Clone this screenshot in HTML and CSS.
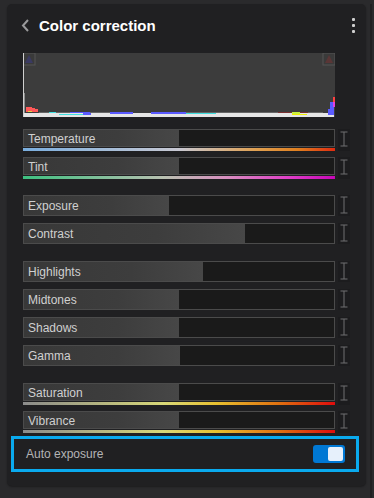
FILE: index.html
```html
<!DOCTYPE html>
<html lang="en">
<head>
  <meta charset="UTF-8">
  <meta name="viewport" content="width=device-width, initial-scale=1.0">
  <title>Color correction</title>
  <link rel="stylesheet" href="styles.css">
</head>
<body>
  <div class="page">
    <div class="panel">
      <div class="header">
        <svg class="back" width="9" height="13" viewBox="0 0 9 13">
          <path d="M7 1 L2 6.5 L7 12" fill="none" stroke="#9a9a9c" stroke-width="2"/>
        </svg>
        <h1>Color correction</h1>
        <svg class="more" width="5" height="16" viewBox="0 0 5 16">
          <rect x="1" y="1" width="3" height="3" rx="1" fill="#cfcfcf"/>
          <rect x="1" y="7" width="3" height="3" rx="1" fill="#cfcfcf"/>
          <rect x="1" y="13" width="3" height="3" rx="1" fill="#cfcfcf"/>
        </svg>
      </div>

      <svg class="histogram" width="312" height="64" viewBox="0 0 312 64">
        <rect width="312" height="64" fill="#3c3c3c"/>
        <rect x="0" y="0" width="12" height="12" fill="#3a3a3a" stroke="#555" stroke-width="1"/>
        <path d="M6 2 L10 10 L2 10 Z" fill="#3a3a62"/>
        <rect x="300" y="0" width="12" height="12" fill="#3a3a3a" stroke="#555" stroke-width="1"/>
        <path d="M306 2 L310 10 L302 10 Z" fill="#5a3636"/>
        <rect x="0" y="0" width="1" height="64" fill="#cfcfcf"/>
        <rect x="1" y="40" width="1" height="24" fill="#8a8a8a"/>
        <path d="M3 54 L9 54 L9 55 L12 55 L12 56 L15 56 L15 59 L3 59 Z" fill="#ff5858"/>
        <rect x="5" y="58" width="4" height="1" fill="#e8d040"/>
        <rect x="1" y="60" width="310" height="4" fill="#e6e6e6"/>
        <rect x="16" y="59" width="90" height="1" fill="#666"/>
        <rect x="130" y="59" width="170" height="1" fill="#666"/>
        <rect x="26" y="59" width="7" height="1" fill="#40e0e0"/>
        <rect x="36" y="61" width="24" height="1" fill="#40e0e0"/>
        <rect x="47" y="59" width="20" height="1" fill="#5a5aff"/>
        <rect x="60" y="60" width="8" height="2" fill="#5a5aff"/>
        <rect x="87" y="59" width="23" height="2" fill="#5a5aff"/>
        <rect x="128" y="59" width="35" height="2" fill="#5a5aff"/>
        <rect x="163" y="60" width="30" height="1" fill="#40e0e0"/>
        <rect x="255" y="59" width="30" height="1" fill="#7a3030"/>
        <rect x="269" y="59" width="8" height="2" fill="#c8f040"/>
        <rect x="269" y="61" width="15" height="1" fill="#f0f000"/>
        <rect x="307" y="49" width="4" height="13" fill="#5a5aff"/>
        <rect x="305" y="56" width="3" height="6" fill="#5a5aff"/>
        <rect x="310" y="49" width="2" height="5" fill="#e040e0"/>
        <rect x="310" y="44" width="2" height="5" fill="#ff4040"/>
      </svg>

      <div class="group">
        <div class="row">
          <div class="control">
            <div class="slider short"><div class="fill" style="width: 50%"></div><span>Temperature</span></div>
            <div class="scale temp"></div>
          </div>
          <div class="reset"><svg width="8" height="16" viewBox="0 0 8 16"><path d="M0.5 1 H7.5 M4 1 V15 M0.5 15 H7.5" stroke="#6e6e70" stroke-width="1" fill="none"/></svg></div>
        </div>
        <div class="row">
          <div class="control">
            <div class="slider short"><div class="fill" style="width: 50%"></div><span>Tint</span></div>
            <div class="scale tint"></div>
          </div>
          <div class="reset"><svg width="8" height="16" viewBox="0 0 8 16"><path d="M0.5 1 H7.5 M4 1 V15 M0.5 15 H7.5" stroke="#6e6e70" stroke-width="1" fill="none"/></svg></div>
        </div>
      </div>

      <div class="group plain">
        <div class="row">
          <div class="slider"><div class="fill" style="width: 46.8%"></div><span>Exposure</span></div>
          <div class="reset"><svg width="8" height="18" viewBox="0 0 8 18"><path d="M0.5 1 H7.5 M4 1 V17 M0.5 17 H7.5" stroke="#6e6e70" stroke-width="1" fill="none"/></svg></div>
        </div>
        <div class="row">
          <div class="slider"><div class="fill" style="width: 71.3%"></div><span>Contrast</span></div>
          <div class="reset"><svg width="8" height="18" viewBox="0 0 8 18"><path d="M0.5 1 H7.5 M4 1 V17 M0.5 17 H7.5" stroke="#6e6e70" stroke-width="1" fill="none"/></svg></div>
        </div>
      </div>

      <div class="group plain">
        <div class="row">
          <div class="slider"><div class="fill" style="width: 57.7%"></div><span>Highlights</span></div>
          <div class="reset"><svg width="8" height="18" viewBox="0 0 8 18"><path d="M0.5 1 H7.5 M4 1 V17 M0.5 17 H7.5" stroke="#6e6e70" stroke-width="1" fill="none"/></svg></div>
        </div>
        <div class="row">
          <div class="slider"><div class="fill" style="width: 50%"></div><span>Midtones</span></div>
          <div class="reset"><svg width="8" height="18" viewBox="0 0 8 18"><path d="M0.5 1 H7.5 M4 1 V17 M0.5 17 H7.5" stroke="#6e6e70" stroke-width="1" fill="none"/></svg></div>
        </div>
        <div class="row">
          <div class="slider"><div class="fill" style="width: 50%"></div><span>Shadows</span></div>
          <div class="reset"><svg width="8" height="18" viewBox="0 0 8 18"><path d="M0.5 1 H7.5 M4 1 V17 M0.5 17 H7.5" stroke="#6e6e70" stroke-width="1" fill="none"/></svg></div>
        </div>
        <div class="row">
          <div class="slider"><div class="fill" style="width: 50.3%"></div><span>Gamma</span></div>
          <div class="reset"><svg width="8" height="18" viewBox="0 0 8 18"><path d="M0.5 1 H7.5 M4 1 V17 M0.5 17 H7.5" stroke="#6e6e70" stroke-width="1" fill="none"/></svg></div>
        </div>
      </div>

      <div class="group">
        <div class="row">
          <div class="control">
            <div class="slider short"><div class="fill" style="width: 50%"></div><span>Saturation</span></div>
            <div class="scale sat"></div>
          </div>
          <div class="reset"><svg width="8" height="16" viewBox="0 0 8 16"><path d="M0.5 1 H7.5 M4 1 V15 M0.5 15 H7.5" stroke="#6e6e70" stroke-width="1" fill="none"/></svg></div>
        </div>
        <div class="row">
          <div class="control">
            <div class="slider short"><div class="fill" style="width: 50%"></div><span>Vibrance</span></div>
            <div class="scale sat"></div>
          </div>
          <div class="reset"><svg width="8" height="16" viewBox="0 0 8 16"><path d="M0.5 1 H7.5 M4 1 V15 M0.5 15 H7.5" stroke="#6e6e70" stroke-width="1" fill="none"/></svg></div>
        </div>
      </div>

      <div class="auto">
        <span>Auto exposure</span>
        <div class="toggle"><div class="knob"></div></div>
      </div>
    </div>
    <div class="scrollbar"></div>
  </div>
</body>
</html>
```

FILE: styles.css
```css
* {
  box-sizing: border-box;
}
body {
  margin: 0;
  height: 498px;
  overflow: hidden;
  background-color: #2a2a2c;
  font-family: "Liberation Sans", Arial, sans-serif;
}
.page {
  display: flex;
  padding: 4px 0 0 7px;
}
.panel {
  width: 359px;
  height: 482px;
  background-color: #202022;
  border-radius: 5px;
  padding: 0 16px;
  display: flex;
  flex-direction: column;
  box-shadow: 0 1px 2px rgba(0, 0, 0, 0.35);
}
.scrollbar {
  width: 2px;
  height: 494px;
  margin-left: 4px;
  background-color: #202022;
}
.header {
  height: 42px;
  margin: 0 -16px;
  padding: 0 10px 0 14px;
  display: flex;
  align-items: center;
}
.back {
  display: block;
  margin-right: 9px;
}
h1 {
  margin: 0;
  font-size: 15px;
  font-weight: bold;
  color: #ffffff;
}
.more {
  display: block;
  margin-left: auto;
}
.histogram {
  display: block;
  margin-top: 7px;
}
.group {
  display: flex;
  flex-direction: column;
  gap: 6px;
  margin-top: 12px;
}
.group.plain {
  gap: 7px;
  margin-top: 16px;
}
.group.plain + .group {
  margin-top: 17px;
}
.row {
  display: flex;
  gap: 3px;
}
.control {
  width: 312px;
  display: flex;
  flex-direction: column;
  gap: 1px;
}
.slider {
  width: 312px;
  height: 21px;
  border: 1px solid #4b4b4b;
  background-color: #1a1a1a;
  display: grid;
}
.slider.short {
  height: 18px;
}
.fill,
.slider span {
  grid-area: 1 / 1;
}
.fill {
  height: 100%;
  background: linear-gradient(to right, #383838, #3d3d3d 60%, #474747);
}
.slider span {
  align-self: center;
  padding-left: 4px;
  font-size: 12px;
  color: #d0d0d0;
}
.slider.short span {
  padding-top: 1px;
}
.scale {
  height: 3px;
}
.scale.temp {
  background: linear-gradient(to right, #7aaede, #c8c8d2 50%, #e0a050 75%, #e08020 88%, #e02c10);
}
.scale.tint {
  background: linear-gradient(to right, #3ec080, #b8c0b0 45%, #d890c0 65%, #e040c8 85%, #c808b8);
}
.scale.sat {
  background: linear-gradient(to right, #8c8c8c, #d8d878 45%, #e8c030 62%, #e07010 82%, #e00c0c);
}
.reset {
  width: 12px;
  background-color: #1c1c1e;
  display: flex;
  justify-content: center;
  align-items: center;
  padding-bottom: 2px;
}
.group.plain .reset {
  padding-bottom: 1px;
}
.reset svg {
  display: block;
}
.auto {
  height: 36px;
  margin: 3px -9px 0 -12px;
  border: 3px solid #0aaaee;
  padding: 0 11px 0 12px;
  display: flex;
  align-items: center;
  justify-content: space-between;
}
.auto span {
  font-size: 12px;
  color: #b4b4b6;
}
.toggle {
  width: 32px;
  height: 18px;
  background-color: #0078d4;
  border-radius: 3px;
  display: flex;
  justify-content: flex-end;
  align-items: center;
  padding-right: 2px;
}
.knob {
  width: 15px;
  height: 14px;
  background-color: #e6f0fb;
  border-radius: 2px;
}
```
